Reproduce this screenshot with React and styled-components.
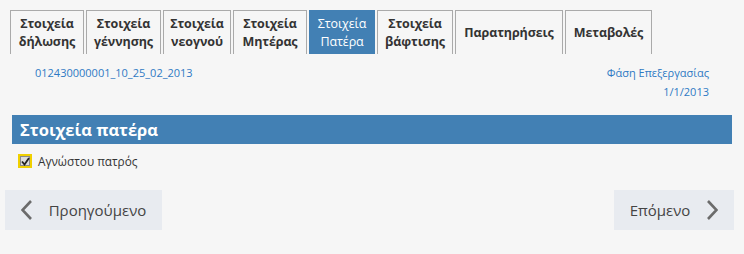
import React, { useState } from "react";
import styled, { createGlobalStyle } from "styled-components";

const GlobalStyle = createGlobalStyle`
    body {
        margin: 0;
        background: #f6f6f6;
        font-family: "Open Sans", "Noto Sans", sans-serif;
        color: #333;
    }
`;

const tabs = [
    { lines: ["Στοιχεία", "δήλωσης"], width: 74 },
    { lines: ["Στοιχεία", "γέννησης"], width: 75 },
    { lines: ["Στοιχεία", "νεογνού"], width: 68 },
    { lines: ["Στοιχεία", "Μητέρας"], width: 74 },
    { lines: ["Στοιχεία", "Πατέρα"], width: 66, active: true },
    { lines: ["Στοιχεία", "βάφτισης"], width: 76 },
    { lines: ["Παρατηρήσεις"], width: 108 },
    { lines: ["Μεταβολές"], width: 87 },
];

export default function App() {
    const [unknown, setUnknown] = useState(true);

    return (
        <Page>
            <GlobalStyle />
            <TabBar>
                {tabs.map((t) => (
                    <Tab key={t.lines.join(" ")} $w={t.width} $active={t.active}>
                        {t.lines.map((l) => (
                            <span key={l}>{l}</span>
                        ))}
                    </Tab>
                ))}
            </TabBar>

            <InfoRow>
                <InfoText>012430000001_10_25_02_2013</InfoText>
                <InfoRight>
                    <InfoText>Φάση Επεξεργασίας</InfoText>
                    <InfoText>1/1/2013</InfoText>
                </InfoRight>
            </InfoRow>

            <SectionTitle>Στοιχεία πατέρα</SectionTitle>

            <CheckRow onClick={() => setUnknown(!unknown)}>
                <Box>
                    {unknown && (
                        <svg width="9" height="9" viewBox="0 0 9 9">
                            <path d="M1 4.5 L3.5 7.5 L8 1" fill="none" stroke="#222" strokeWidth="1.8" />
                        </svg>
                    )}
                </Box>
                <CheckLabel>Αγνώστου πατρός</CheckLabel>
            </CheckRow>

            <NavRow>
                <NavButton $w={157}>
                    <Chevron dir="left" />
                    <span>Προηγούμενο</span>
                </NavButton>
                <NavButton $w={120}>
                    <span>Επόμενο</span>
                    <Chevron dir="right" />
                </NavButton>
            </NavRow>
        </Page>
    );
}

function Chevron({ dir }) {
    const pts = dir === "left" ? "10,1 1.5,10 10,19" : "1,1 9.5,10 1,19";
    return (
        <svg width="11" height="20" viewBox="0 0 11 20">
            <polyline points={pts} fill="none" stroke="#6b6b6b" strokeWidth="2.6" />
        </svg>
    );
}

const Page = styled.div`
    width: 744px;
    height: 254px;
    overflow: hidden;
`;

const TabBar = styled.div`
    display: flex;
    gap: 2px;
    padding: 10px 0 0 10px;
`;

const Tab = styled.div`
    box-sizing: border-box;
    width: ${(p) => p.$w}px;
    height: 44px;
    display: flex;
    flex-direction: column;
    align-items: center;
    justify-content: center;
    border: 1px solid ${(p) => (p.$active ? "#4280b4" : "#aaaaaa")};
    border-bottom: none;
    background: ${(p) => (p.$active ? "#4280b4" : "#f6f6f6")};
    color: ${(p) => (p.$active ? "#ffffff" : "#333333")};
    font-size: 12.5px;
    font-weight: ${(p) => (p.$active ? 400 : 700)};
    line-height: 18px;
    letter-spacing: -0.1px;
`;

const InfoRow = styled.div`
    display: flex;
    justify-content: space-between;
    align-items: flex-start;
    padding: 9px 35px 0 35px;
    height: 52px;
    box-sizing: border-box;
`;

const InfoRight = styled.div`
    display: flex;
    flex-direction: column;
    align-items: flex-end;
`;

const InfoText = styled.div`
    font-size: 11px;
    line-height: 19px;
    color: #2f7ac4;
`;

const SectionTitle = styled.div`
    margin: 9px 12px 0 12px;
    height: 29px;
    background: #4280b4;
    color: #fff;
    font-size: 16.5px;
    font-weight: 700;
    line-height: 30px;
    padding-left: 8px;
`;

const CheckRow = styled.div`
    display: flex;
    align-items: center;
    gap: 6px;
    margin: 9px 0 0 18px;
    cursor: pointer;
`;

const Box = styled.span`
    box-sizing: border-box;
    width: 14px;
    height: 14px;
    display: flex;
    align-items: center;
    justify-content: center;
    border: 2px solid #f0d000;
    background: #dcdcdc;
    box-shadow: inset 0 0 0 1px #8a8a8a;
`;

const CheckLabel = styled.span`
    font-size: 11.8px;
    color: #333;
`;

const NavRow = styled.div`
    display: flex;
    justify-content: space-between;
    margin: 21px 10px 0 5px;
`;

const NavButton = styled.div`
    width: ${(p) => p.$w}px;
    height: 40px;
    background: #e8ebf0;
    display: flex;
    align-items: center;
    justify-content: center;
    gap: 17px;
    color: #444;
    font-size: 15px;
    cursor: pointer;
`;
